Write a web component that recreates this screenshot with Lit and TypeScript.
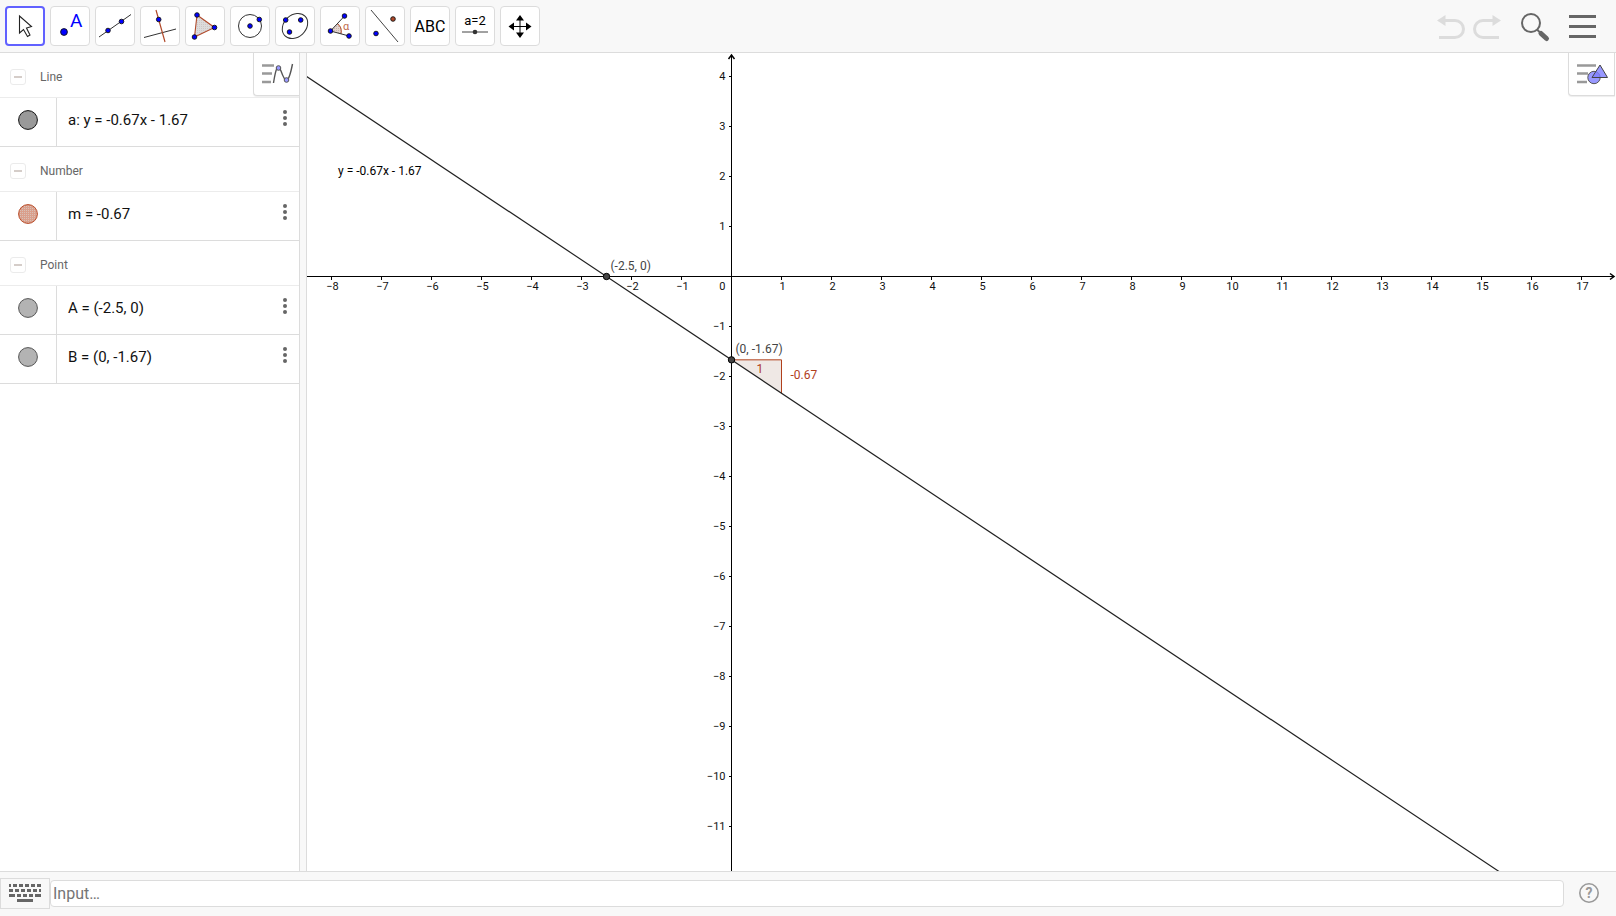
import { LitElement, html, css, svg } from "lit";
import { customElement, state } from "lit/decorators.js";

const range = (a: number, b: number) => Array.from({ length: b - a + 1 }, (_, i) => a + i);

const dot = (x: number, y: number, r = 2.3, fill = "#0000ff") =>
  svg`<circle cx=${x} cy=${y} r=${r} fill=${fill} stroke="#111" stroke-width="0.9"></circle>`;

const hatch = (id: string, back: string, front: string) => svg`
  <defs><pattern id=${id} width="2" height="2" patternUnits="userSpaceOnUse">
    <rect width="2" height="2" fill=${back}></rect><rect width="1" height="1" fill=${front}></rect>
  </pattern></defs>`;

const TOOLS = [
  { name: "Move", art: svg`<path d="M14.5 10V27L18.5 23.5L22.5 30.5L25 29L21.5 22L26.5 20.5Z" fill="#fff" stroke="#222" stroke-width="1.1"></path>` },
  { name: "Point", art: svg`${dot(14, 26, 3.4)}<text class="letter" x="20" y="21">A</text>` },
  { name: "Line", art: svg`<path d="M4 31L36 8.5" stroke="#333" fill="none"></path>${dot(13, 24.5)}${dot(26.5, 15.5)}` },
  { name: "Perpendicular Line", art: svg`<path d="M4 31.5L36 23" stroke="#333"></path><path d="M16 4L25 36" stroke="#b0492a" stroke-width="1.2"></path>${dot(18.7, 13.5)}` },
  { name: "Polygon", art: svg`${hatch("poly", "#dcdcdc", "#cfc6c6")}<path d="M12 9L29.5 21.5L9.5 31Z" fill="url(#poly)" stroke="#b0492a" stroke-width="1.1"></path>${dot(12, 9)}${dot(29.5, 21.5)}${dot(9.5, 31)}` },
  { name: "Circle with Center", art: svg`<circle cx="20" cy="20" r="11.5" fill="none" stroke="#333"></circle>${dot(20, 20)}${dot(29.3, 13.5)}` },
  { name: "Ellipse", art: svg`<ellipse cx="20" cy="20" rx="14" ry="11" transform="rotate(-43 20 20)" fill="none" stroke="#333"></ellipse>${dot(10.7, 14)}${dot(25.7, 14)}${dot(14.5, 26)}` },
  { name: "Angle", art: svg`${hatch("ang", "#e3d5d0", "#c9b3ab")}<path d="M10 25L18 17A11 11 0 0 1 21 28Z" fill="url(#ang)"></path><path d="M17 17.5Q22.5 21 21 28" fill="none" stroke="#b0492a"></path><path d="M24.5 10L10.5 25L29 30" fill="none" stroke="#333"></path>${dot(24.5, 10)}${dot(10.5, 25)}${dot(29, 30)}<text class="alpha" x="23" y="24">α</text>` },
  { name: "Reflect about Line", art: svg`<path d="M6 4L33 36" stroke="#444"></path>${dot(28, 13, 2.3, "#b0492a")}${dot(11, 27.5)}` },
  { name: "Text", art: svg`<text class="abc" x="20" y="26">ABC</text>` },
  { name: "Slider", art: svg`<text class="slider" x="20" y="19">a=2</text><path d="M7 26H33" stroke="#444"></path><circle cx="20" cy="26" r="2.3" fill="#333"></circle>` },
  { name: "Move Graphics View", art: svg`<path d="M20 14V28M13 20.5H27" stroke="#000"></path><path d="M20 9L24 14.5H16ZM20 32L24 26.500H16ZM8.500 20.5L14 16.500V24.500ZM31.500 20.5L26 16.500V24.500Z" fill="#000"></path>` },
];

const GROUPS = [
  { name: "Line", rows: [{ text: "a: y = -0.67x - 1.67", kind: "line" }] },
  { name: "Number", rows: [{ text: "m = -0.67", kind: "number" }] },
  { name: "Point", rows: [{ text: "A = (-2.5, 0)", kind: "point" }, { text: "B = (0, -1.67)", kind: "point" }] },
];

@customElement("tool-bar")
class ToolBar extends LitElement {
  static styles = css`
    :host { display: flex; justify-content: space-between; align-items: center; height: 52px; padding: 0 20px 0 5px; background: #f8f8f8; border-bottom: 1px solid #dcdcdc; }
    .group { display: flex; gap: 5px; }
    button { padding: 0; cursor: pointer; font: inherit; }
    .tool { box-sizing: border-box; width: 40px; height: 40px; border: 1px solid #dcdcdc; border-radius: 4px; background: #fff; display: grid; place-items: center; }
    .tool.active { border: 2px solid #6161ff; }
    .tool svg { width: 40px; height: 40px; margin: -2px; }
    .plain { border: 0; background: none; display: block; }
    .plain svg { display: block; }
    .actions { display: flex; align-items: center; }
    .history { display: flex; gap: 7px; margin-right: 13px; }
    .letter { font: 19px Roboto, sans-serif; fill: #0000ff; }
    .alpha { font: 11px Roboto, sans-serif; fill: #c06a4e; }
    .abc { font: 16px Roboto, sans-serif; text-anchor: middle; }
    .slider { font: 13px Roboto, sans-serif; text-anchor: middle; }
  `;
  @state() private active = 0;
  render() {
    return html`
      <div class="group">${TOOLS.map((t, i) => html`
        <button class="tool ${i === this.active ? "active" : ""}" aria-label=${t.name} @click=${() => (this.active = i)}>
          <svg viewBox="0 0 40 40">${t.art}</svg>
        </button>`)}</div>
      <div class="actions">
        <div class="history">
          <button class="plain" aria-label="Undo"><svg width="36" height="40" viewBox="0 0 36 40"><path d="M10 31.5H26A8.5 8.5 0 0 0 26 14.5H16" fill="none" stroke="#dcdcdc" stroke-width="3"></path><path d="M8 14.5L16.5 9V20Z" fill="#dcdcdc"></path></svg></button>
          <button class="plain" aria-label="Redo"><svg width="36" height="40" viewBox="0 0 36 40"><path d="M27 31.5H11A8.5 8.5 0 0 1 11 14.5H22" fill="none" stroke="#dcdcdc" stroke-width="3"></path><path d="M29 14.5L20.5 9V20Z" fill="#dcdcdc"></path></svg></button>
        </div>
        <button class="plain" aria-label="Search"><svg width="48" height="40" viewBox="0 0 48 40"><circle cx="10" cy="17" r="9" fill="none" stroke="#666" stroke-width="2"></circle><path d="M16 23.5L20 27.5" stroke="#666" stroke-width="2"></path><path d="M20 27.5L25.5 32.5" stroke="#666" stroke-width="5" stroke-linecap="round"></path></svg></button>
        <button class="plain" aria-label="Menu"><svg width="27" height="40" viewBox="0 0 27 40"><path d="M0 10.5H27M0 20.5H27M0 30.5H27" stroke="#666" stroke-width="3"></path></svg></button>
      </div>`;
  }
}

@customElement("algebra-view")
class AlgebraView extends LitElement {
  static styles = css`
    :host { display: block; position: relative; background: #fff; border-right: 1px solid #dcdcdc; font-family: Roboto, sans-serif; }
    button { padding: 0; border: 0; background: none; cursor: pointer; font: inherit; }
    .head { display: flex; align-items: center; gap: 14px; box-sizing: border-box; height: 45px; padding: 4px 10px 0; border-bottom: 1px solid #ececec; color: #666; font-size: 12px; }
    .fold { box-sizing: border-box; width: 16px; height: 16px; border: 1px solid #ebebeb; border-radius: 3px; display: grid; place-items: center; }
    .fold::after { content: ""; width: 8px; height: 2px; background: #d5cdc9; }
    .row { display: flex; align-items: stretch; box-sizing: border-box; height: 49px; border-bottom: 1px solid #dcdcdc; }
    .mark { box-sizing: border-box; width: 57px; border-right: 1px solid #dcdcdc; display: grid; place-items: center; padding-bottom: 4px; }
    .mark svg, .more svg, .style svg { display: block; }
    .text { flex: 1; padding-left: 11px; line-height: 45px; font-size: 15px; color: #111; }
    .more { width: 28px; display: grid; place-items: center; padding-bottom: 8px; }
    .style { position: absolute; top: 0; right: 0; width: 46px; height: 43px; box-sizing: border-box; background: #fff; border: solid #dcdcdc; border-width: 0 0 1px 1px; border-radius: 0 0 0 4px; box-shadow: 0 1px 1px #eee; }
  `;
  private mark(kind: string) {
    const fill = kind === "line" ? "#999" : kind === "number" ? "url(#num)" : "#b3b3b3";
    const stroke = kind === "line" ? "#111" : kind === "number" ? "#b84a26" : "#555";
    return html`<svg width="20" height="20" viewBox="0 0 20 20">${kind === "number" ? hatch("num", "#da9f8c", "#d9c0b6") : ""}<circle cx="10" cy="10" r="9.4" fill=${fill} stroke=${stroke}></circle></svg>`;
  }
  render() {
    return html`
      ${GROUPS.map((g) => html`
        <div class="head"><button class="fold" aria-label="Collapse ${g.name}"></button><span>${g.name}</span></div>
        ${g.rows.map((r) => html`
          <div class="row">
            <button class="mark" aria-label="Show or hide">${this.mark(r.kind)}</button>
            <div class="text">${r.text}</div>
            <button class="more" aria-label="More"><svg width="4" height="16" viewBox="0 0 4 16" fill="#666"><circle cx="2" cy="2" r="2"></circle><circle cx="2" cy="8" r="2"></circle><circle cx="2" cy="14" r="2"></circle></svg></button>
          </div>`)}`)}
      <button class="style" aria-label="Algebra style"><svg width="45" height="42" viewBox="0 0 45 42"><path d="M8 12.5H20M8 20.5H18M8 29H17" stroke="#999" stroke-width="2.5"></path><path d="M19.5 30C22 14 24 10 27 18C31 29 34 34 38.5 11" fill="none" stroke="#555" stroke-width="1.4"></path><circle cx="24.5" cy="15" r="2.3" fill="#99f" stroke="#555"></circle><circle cx="32.5" cy="27" r="2.3" fill="#99f" stroke="#555"></circle></svg></button>`;
  }
}

const UNIT = 50;
const OX = 424;
const OY = 223;

@customElement("graphics-view")
class GraphicsView extends LitElement {
  static styles = css`
    :host { display: block; position: relative; overflow: hidden; background: #fff; border-left: 1px solid #dcdcdc; }
    .plot { position: absolute; inset: 0; width: 100%; height: 100%; display: block; }
    .axis { stroke: #000; shape-rendering: crispEdges; }
    .num { font: 11px Roboto, sans-serif; fill: #111; }
    .mid { text-anchor: middle; }
    .end { text-anchor: end; }
    .label { font: 12px Roboto, sans-serif; fill: #444; }
    .eq { fill: #000; }
    .slope { fill: #b0401c; }
    .style { position: absolute; top: 0; right: 1px; width: 47px; height: 43px; box-sizing: border-box; padding: 0; background: #fff; border: solid #dcdcdc; border-width: 0 1px 1px 1px; border-radius: 0 0 0 4px; box-shadow: 0 1px 1px #eee; cursor: pointer; }
    .style svg { display: block; }
  `;
  @state() private w = 1308;
  @state() private h = 818;
  private ro = new ResizeObserver(([e]) => { this.w = e.contentRect.width; this.h = e.contentRect.height; });
  connectedCallback() { super.connectedCallback(); this.ro.observe(this); }
  disconnectedCallback() { super.disconnectedCallback(); this.ro.disconnect(); }
  render() {
    const { w, h } = this;
    const px = (x: number) => OX + x * UNIT + 0.5;
    const py = (y: number) => OY - y * UNIT + 0.5;
    const f = (x: number) => (-2 * x - 5) / 3;
    const fmt = (n: number) => String(n).replace("-", "−");
    const xs = range(-8, Math.floor((w - OX - 10) / UNIT)).filter((n) => n);
    const ys = range(-Math.floor((h - OY - 20) / UNIT), 4).filter((n) => n);
    return html`
      <svg class="plot" role="img" aria-label="Graph">
        <path class="axis" fill="none" d="M0 ${py(0)}H${w - 2}M${px(0)} 3V${h}"></path>
        <path fill="none" stroke="#000" stroke-width="1.5" d="M${w - 6} ${py(0) - 3}L${w - 2} ${py(0)}L${w - 6} ${py(0) + 3}M${px(0) - 3} 6L${px(0)} 2L${px(0) + 3} 6"></path>
        ${xs.map((n) => svg`<path class="axis" d="M${px(n)} ${py(0)}v3"></path><text class="num mid" x=${px(n) + 1} y=${py(0) + 13}>${fmt(n)}</text>`)}
        ${ys.map((n) => svg`<path class="axis" d="M${px(0)} ${py(n)}h-3"></path><text class="num end" x=${px(0) - 6} y=${py(n) + 3}>${fmt(n)}</text>`)}
        <text class="num end" x=${px(0) - 6} y=${py(0) + 13}>0</text>
        <path d="M${px(0)} ${py(f(0))}H${px(1)}V${py(f(1))}Z" fill="#efe8e5"></path>
        <path d="M${px(0)} ${py(f(0))}H${px(1)}V${py(f(1))}" fill="none" stroke="#b0401c"></path>
        <path d="M${px(-9)} ${py(f(-9))}L${px(20)} ${py(f(20))}" stroke="#222" stroke-width="1.2"></path>
        <circle cx=${px(-2.5)} cy=${py(0)} r="3.2" fill="#444" stroke="#000"></circle>
        <circle cx=${px(0)} cy=${py(f(0))} r="3.2" fill="#444" stroke="#000"></circle>
        <text class="label" x=${px(-2.5) + 4} y=${py(0) - 7}>(-2.5, 0)</text>
        <text class="label" x=${px(0) + 4} y=${py(f(0)) - 7}>(0, -1.67)</text>
        <text class="label slope" x=${px(0.5)} y=${py(f(0)) + 13}>1</text>
        <text class="label slope" x=${px(1) + 9} y=${py(-2) + 2}>-0.67</text>
        <text class="label eq" x="31" y="122">y = -0.67x - 1.67</text>
      </svg>
      <button class="style" aria-label="Graphics style"><svg width="45" height="42" viewBox="0 0 45 42"><path d="M8 12.5H27M8 20.5H19M8 29H18" stroke="#999" stroke-width="2.5"></path><circle cx="25" cy="24.5" r="6.2" fill="#99f" stroke="#555"></circle><path d="M31 12L38.5 24.5H23Z" fill="#8080ff" fill-opacity=".8" stroke="#444"></path></svg></button>`;
  }
}

@customElement("input-bar")
class InputBar extends LitElement {
  static styles = css`
    :host { display: flex; align-items: center; height: 42px; padding-bottom: 2px; border-top: 1px solid #dcdcdc; background: #f8f8f8; }
    button { padding: 0; cursor: pointer; }
    .keys { box-sizing: border-box; width: 50px; height: 31px; background: none; border: 1px solid #dcdcdc; display: grid; place-items: center; }
    input { flex: 1; min-width: 0; box-sizing: border-box; height: 27px; border: 1px solid #dcdcdc; border-radius: 4px; padding: 0 2px; background: #fff; font: 16px Roboto, sans-serif; color: #222; outline: 0; }
    input::placeholder { color: #757575; opacity: 1; }
    .help { border: 0; background: none; margin: 0 17px 0 15px; }
    svg { display: block; }
    .q { font: bold 14px Roboto, sans-serif; fill: #999; text-anchor: middle; }
  `;
  render() {
    return html`
      <button class="keys" aria-label="Keyboard"><svg width="34" height="20" viewBox="0 0 34 20"><g stroke="#666" stroke-width="3"><path d="M1 2.5H33" stroke-dasharray="2 2 4 2 4 2 4 2 4 2 4"></path><path d="M1 7.5H33" stroke-dasharray="4 2"></path><path d="M1 12.5H33" stroke-dasharray="6 2 4 2 4 2 4 2 6"></path><path d="M9 17.5H25"></path></g></svg></button>
      <input type="text" placeholder="Input…" aria-label="Input" />
      <button class="help" aria-label="Help"><svg width="20" height="20" viewBox="0 0 20 20"><circle cx="10" cy="10" r="9.2" fill="none" stroke="#999" stroke-width="1.6"></circle><text class="q" x="10" y="15">?</text></svg></button>`;
  }
}

@customElement("app-root")
class AppRoot extends LitElement {
  static styles = css`
    :host { display: flex; flex-direction: column; height: 100vh; overflow: hidden; background: #fff; }
    .main { flex: 1; min-height: 0; display: grid; grid-template-columns: 300px 6px 1fr; }
    .split { background: #f8f8f8; }
  `;
  render() {
    return html`<tool-bar></tool-bar>
      <div class="main"><algebra-view></algebra-view><div class="split"></div><graphics-view></graphics-view></div>
      <input-bar></input-bar>`;
  }
}
